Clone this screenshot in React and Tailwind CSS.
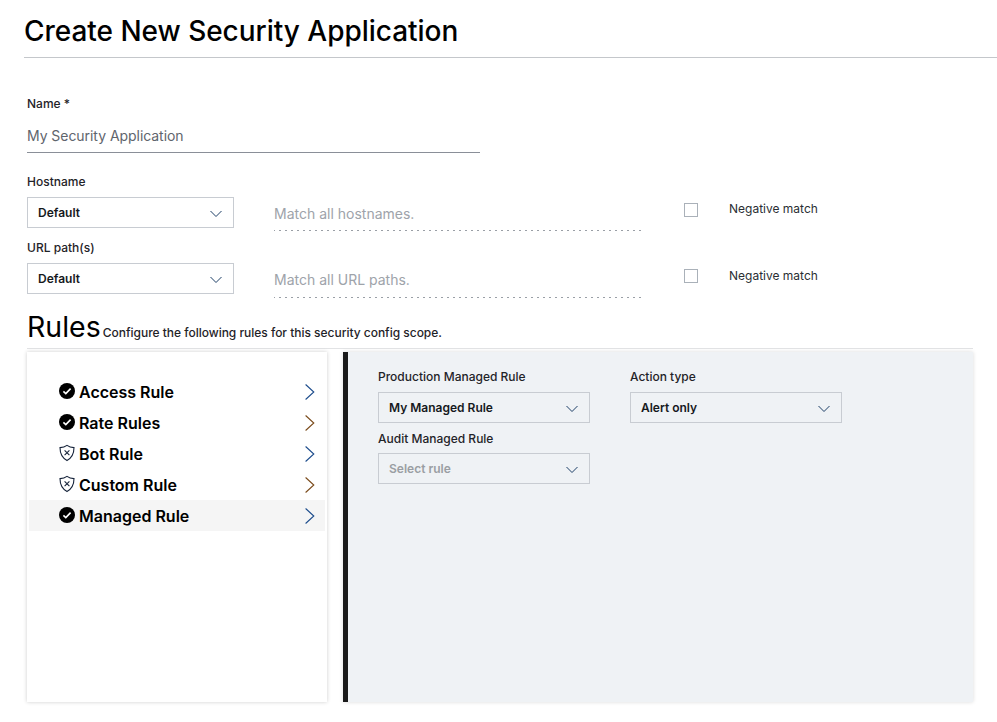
import React from 'react'

const rules = [
    { name: 'Access Rule', done: true, chevron: '#1c4c8c' },
    { name: 'Rate Rules', done: true, chevron: '#7a4a1a' },
    { name: 'Bot Rule', done: false, chevron: '#1c4c8c' },
    { name: 'Custom Rule', done: false, chevron: '#7a4a1a' },
    { name: 'Managed Rule', done: true, active: true, chevron: '#1c4c8c' },
]

function CheckIcon() {
    return (
        <svg width="16" height="16" viewBox="0 0 16 16" className="-mt-[1px] shrink-0">
            <circle cx="8" cy="8" r="8" fill="#000" />
            <path d="M4.4 8.3l2.4 2.3 4.8-5" fill="none" stroke="#fff" strokeWidth="1.6" />
        </svg>
    )
}

function ShieldIcon() {
    return (
        <svg width="16" height="18" viewBox="0 0 16 18" className="-mt-[1px] shrink-0">
            <path d="M8 1.4C9.8 2.8 12.4 3.6 15 3.6C15 9.5 13.5 13.6 8 16.6C2.5 13.6 1 9.5 1 3.6C3.6 3.6 6.2 2.8 8 1.4Z" fill="none" stroke="#16233a" strokeWidth="1.1" />
            <path d="M5.6 6.4l4.8 4.8M10.4 6.4l-4.8 4.8" fill="none" stroke="#16233a" strokeWidth="1.1" />
        </svg>
    )
}

function ArrowRight({ color }) {
    return (
        <svg width="10" height="18" viewBox="0 0 10 18" className="mt-[1px] shrink-0">
            <path d="M0.6 1.5L8.8 9L0.6 16.5" fill="none" stroke={color} strokeWidth="1.1" />
        </svg>
    )
}

function ArrowDown() {
    return (
        <svg width="12" height="8" viewBox="0 0 12 8" className="mt-[3px] shrink-0">
            <path d="M0.5 1L6 6.5L11.5 1" fill="none" stroke="#1c3f66" strokeWidth="1" />
        </svg>
    )
}

function Select({ value, muted, width = 'w-[207px]', bg = 'bg-white' }) {
    return (
        <div className={`flex h-[31px] ${width} items-center justify-between border border-[#c8ccd2] ${bg} pl-[10px] pr-[11px]`}>
            <span className={`pt-[0.6px] text-xs font-semibold ${muted ? 'text-[#9a9ea3]' : 'text-[#16191d]'}`}>{value}</span>
            <ArrowDown />
        </div>
    )
}

function MatchRow({ label, value, hint }) {
    return (
        <div className="pl-[27px]">
            <div className="text-xs font-medium leading-4 text-[#1f2328]">{label}</div>
            <div className="mt-[7px] flex items-start">
                <Select value={value} />
                <div className="ml-10 flex h-[34.3px] w-[370px] items-center bg-[repeating-linear-gradient(to_right,#9a9fa6_0,#9a9fa6_1px,transparent_1px,transparent_5px,#9a9fa6_5px,#9a9fa6_6px)] bg-[length:100%_1px] bg-bottom bg-no-repeat text-sm text-[#9ea3aa]">
                    {hint}
                </div>
                <div className="ml-10 mt-[6px] h-[14px] w-[14px] border border-[#aab1b9] bg-white" />
                <div className="ml-[31px] mt-[4.4px] text-xs leading-4 text-[#2a2e33]">Negative match</div>
            </div>
        </div>
    )
}

export default function App() {
    return (
        <div className="min-h-[722px] bg-white font-['Inter',sans-serif]">
            <div className="ml-6 flex h-[58px] items-center border-b border-[#c4c7cb] pt-[4px]">
                <h1 className="text-[28px] font-medium leading-9 tracking-[-0.03px] text-black">Create New Security Application</h1>
            </div>

            <div className="pl-[27px] pt-[38px]">
                <div className="text-xs font-medium leading-4 text-[#1f2328]">Name *</div>
                <div className="mt-[7px] flex h-[34px] w-[453px] items-center border-b border-[#8a8f98] text-sm tracking-[-0.05px] text-[#5f656d]">
                    My Security Application
                </div>
            </div>

            <div className="mt-[20.8px]">
                <MatchRow label="Hostname" value="Default" hint="Match all hostnames." />
            </div>
            <div className="mt-[9.2px]">
                <MatchRow label="URL path(s)" value="Default" hint="Match all URL paths." />
            </div>

            <div className="ml-[27px] mr-[24px] mt-[11.4px] flex h-[40px] items-end border-b border-[#e2e3e5] pb-[3px]">
                <span className="text-[28.5px] leading-9 text-black">Rules</span>
                <span className="mb-[4px] ml-[2px] text-xs font-medium leading-4 tracking-[-0.02px] text-[#1f2328]">
                    Configure the following rules for this security config scope.
                </span>
            </div>

            <div className="ml-[27px] mr-[24px] mt-[3px] flex h-[350px] gap-4">
                <div className="w-[300px] bg-white px-[2px] pt-[24px] shadow-[0_0_4px_rgba(0,0,0,0.2)]">
                    {rules.map((rule) => (
                        <div
                            key={rule.name}
                            className={`flex h-[31px] items-center pl-[30px] pr-[10px] ${rule.active ? 'bg-[#f5f5f5]' : ''}`}
                        >
                            {rule.done ? <CheckIcon /> : <ShieldIcon />}
                            <span className="ml-1 mt-[1px] flex-1 text-base font-semibold text-black">{rule.name}</span>
                            <ArrowRight color={rule.chevron} />
                        </div>
                    ))}
                </div>

                <div className="flex-1 border-l-[5px] border-[#1a1a1a] bg-[#eff2f5] pl-[30px] pt-[17px] shadow-[0_0_4px_rgba(0,0,0,0.15)]">
                    <div className="flex gap-10">
                        <div>
                            <div className="mb-[7px] text-xs font-medium leading-4 text-[#1f2328]">Production Managed Rule</div>
                            <Select value="My Managed Rule" width="w-[212px]" bg="bg-[#eff2f5]" />
                            <div className="mb-[6px] mt-[8px] text-xs font-medium leading-4 text-[#1f2328]">Audit Managed Rule</div>
                            <Select value="Select rule" muted width="w-[212px]" bg="bg-[#eff2f5]" />
                        </div>
                        <div>
                            <div className="mb-[7px] text-xs font-medium leading-4 text-[#1f2328]">Action type</div>
                            <Select value="Alert only" width="w-[212px]" bg="bg-[#eff2f5]" />
                        </div>
                    </div>
                </div>
            </div>
        </div>
    )
}
